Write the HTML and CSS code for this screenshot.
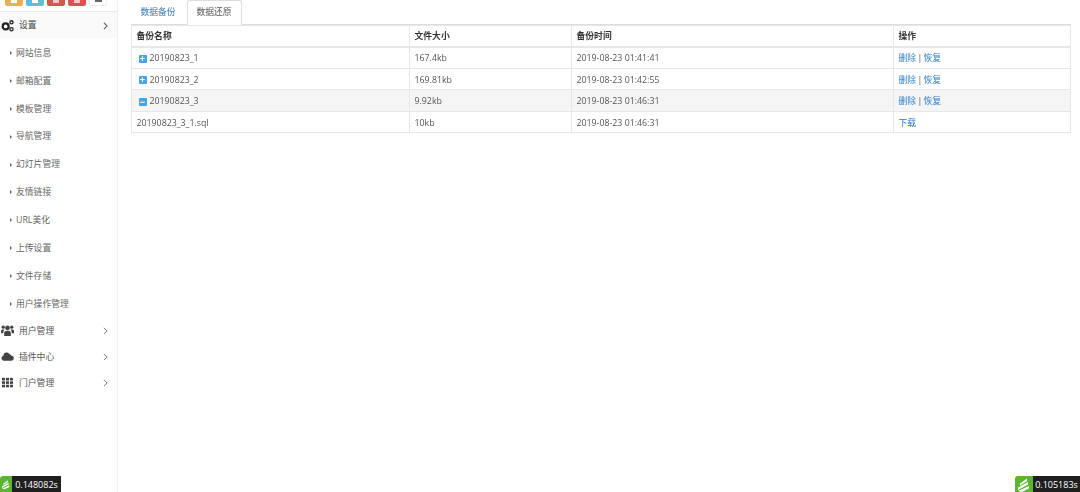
FILE: index.html
```html
<!DOCTYPE html>
<html lang="zh-CN">
<head>
<meta charset="utf-8">
<title>数据还原</title>
<link rel="stylesheet" href="styles.css">
</head>
<body>
<div class="app">
  <aside class="sidebar">
    <div class="shortcuts">
      <span class="sc sc-orange"><i></i></span>
      <span class="sc sc-blue"><i></i></span>
      <span class="sc sc-red"><i></i></span>
      <span class="sc sc-red"><i></i></span>
      <span class="sc sc-white"><i></i></span>
    </div>
    <div class="group group-open">
      <svg class="gi" viewBox="0 0 14 14"><circle cx="5" cy="8" r="3.2" fill="none" stroke="#222" stroke-width="2.4"/><circle cx="11.3" cy="3.6" r="1.7" fill="none" stroke="#222" stroke-width="1.4"/><circle cx="11.3" cy="11" r="1.7" fill="none" stroke="#222" stroke-width="1.4"/></svg>
      <span class="gl">设置</span>
      <svg class="chev" viewBox="0 0 6 10"><path d="M1 1l4 4-4 4" fill="none" stroke="#555" stroke-width="1.3"/></svg>
    </div>
    <ul class="sub">
      <li>网站信息</li><li>邮箱配置</li><li>模板管理</li><li>导航管理</li><li>幻灯片管理</li><li>友情链接</li><li>URL美化</li><li>上传设置</li><li>文件存储</li><li>用户操作管理</li>
    </ul>
    <div class="group">
      <svg class="gi" viewBox="0 0 14 14"><g fill="#444"><circle cx="7" cy="4.200" r="2.500"/><circle cx="2.400" cy="3.400" r="1.800"/><circle cx="11.600" cy="3.400" r="1.800"/><path d="M3.400 13V9.600c0-1.500 1.200-2.400 3.600-2.400s3.600.9 3.600 2.400V13z"/><path d="M0 10V7.400c0-1 .8-1.600 2.400-1.600.6 0 1 .1 1.400.3C2.700 7 2.400 8 2.400 10z"/><path d="M14 10V7.400c0-1-.8-1.600-2.400-1.600-.6 0-1 .1-1.400.3 1.100.9 1.400 1.900 1.400 3.900z"/></g></svg>
      <span class="gl">用户管理</span>
      <svg class="chev" viewBox="0 0 6 10"><path d="M1 1l4 4-4 4" fill="none" stroke="#777" stroke-width="1.2"/></svg>
    </div>
    <div class="group">
      <svg class="gi" viewBox="0 0 14 14"><path fill="#444" d="M3 11.500a2.700 2.700 0 0 1-.5-5.300A3.600 3.600 0 0 1 9.300 4.600a2.200 2.200 0 0 1 1.900 1.500A2.700 2.700 0 0 1 11 11.500z"/></svg>
      <span class="gl">插件中心</span>
      <svg class="chev" viewBox="0 0 6 10"><path d="M1 1l4 4-4 4" fill="none" stroke="#777" stroke-width="1.2"/></svg>
    </div>
    <div class="group">
      <svg class="gi" viewBox="0 0 14 14"><g fill="#444"><rect x="1" y="2" width="3.300" height="2.800"/><rect x="5.300" y="2" width="3.300" height="2.800"/><rect x="9.600" y="2" width="3.300" height="2.800"/><rect x="1" y="5.700" width="3.300" height="2.800"/><rect x="5.300" y="5.700" width="3.300" height="2.800"/><rect x="9.600" y="5.700" width="3.300" height="2.800"/><rect x="1" y="9.400" width="3.300" height="2.800"/><rect x="5.300" y="9.400" width="3.300" height="2.800"/><rect x="9.600" y="9.400" width="3.300" height="2.800"/></g></svg>
      <span class="gl">门户管理</span>
      <svg class="chev" viewBox="0 0 6 10"><path d="M1 1l4 4-4 4" fill="none" stroke="#777" stroke-width="1.2"/></svg>
    </div>
  </aside>
  <main class="main">
    <nav class="tabs">
      <a class="tab">数据备份</a>
      <a class="tab tab-active">数据还原</a>
    </nav>
    <table class="table">
      <colgroup><col class="c1"><col class="c2"><col class="c3"><col class="c4"></colgroup>
      <thead>
        <tr><th>备份名称</th><th>文件大小</th><th>备份时间</th><th>操作</th></tr>
      </thead>
      <tbody>
        <tr><td><span class="tg">+</span>20190823_1</td><td>167.4kb</td><td>2019-08-23 01:41:41</td><td class="ops"><a>删除</a> | <a>恢复</a></td></tr>
        <tr><td><span class="tg">+</span>20190823_2</td><td>169.81kb</td><td>2019-08-23 01:42:55</td><td class="ops"><a>删除</a> | <a>恢复</a></td></tr>
        <tr class="row-open"><td><span class="tg">−</span>20190823_3</td><td>9.92kb</td><td>2019-08-23 01:46:31</td><td class="ops"><a>删除</a> | <a>恢复</a></td></tr>
        <tr><td>20190823_3_1.sql</td><td>10kb</td><td>2019-08-23 01:46:31</td><td class="ops"><a>下载</a></td></tr>
      </tbody>
    </table>
  </main>
</div>
<div class="trace trace-left">
  <span class="logo"><svg viewBox="0 0 18 16"><path d="M3 15l11-5v2.500L7 16zM3 11.500l10-5.500v2.500L3 14zM5 7.500l7-5v2.500l-7 4.500z" fill="#fff"/></svg></span><span class="time">0.148082s</span>
</div>
<div class="trace trace-right">
  <span class="logo"><svg viewBox="0 0 18 16"><path d="M3 15l11-5v2.500L7 16zM3 11.500l10-5.500v2.500L3 14zM5 7.500l7-5v2.500l-7 4.500z" fill="#fff"/></svg></span><span class="time">0.105183s</span>
</div>
</body>
</html>
```
FILE: styles.css
```css
* { box-sizing: border-box; }
html, body { margin: 0; height: 100%; overflow: hidden; }
body {
  background: #fff;
  color: #555;
  font: 8.8px/1.4 "Open Sans", "Noto Sans CJK SC", sans-serif;
}
.app { display: flex; height: 492px; filter: blur(0.3px); }

.sidebar {
  width: 118px;
  flex: none;
  border-right: 1px solid #f0f0f0;
  background: #fff;
}
.shortcuts {
  height: 12px;
  display: flex;
  gap: 3px;
  padding-left: 5px;
  border-bottom: 1px solid #e8e8e8;
  background: #fff;
  overflow: hidden;
}
.sc {
  width: 18px;
  height: 6px;
  border-radius: 0 0 2px 2px;
  display: flex;
  justify-content: center;
}
.sc i { display: block; width: 6px; height: 3px; background: #fff; }
.sc-orange { background: #f0ad4e; }
.sc-blue { background: #5bc0de; }
.sc-red { background: #d9534f; }
.sc-red i { background: #f3c9c4; }
.sc-white { background: #fff; border: 1px solid #eee; border-top: 0; }
.sc-white i { background: #666; width: 7px; height: 2px; }

.group {
  height: 26px;
  display: flex;
  align-items: center;
  padding: 0 9px 0 1px;
  color: #555;
}
.group-open { background: #f9f9f9; color: #444; padding-top: 1px; }
.gi { width: 13px; height: 13px; flex: none; }
.gl { margin-left: 5px; flex: 1; }
.chev { width: 5px; height: 8px; flex: none; }

.sub { list-style: none; margin: 1px 0 0; padding: 0; }
.sub li {
  height: 27.900px;
  display: flex;
  align-items: center;
  padding-left: 16px;
  position: relative;
  color: #666;
}
.sub li::before {
  content: "";
  position: absolute;
  left: 10px;
  top: 50%;
  margin-top: -2px;
  border-left: 2.500px solid #666;
  border-top: 2px solid transparent;
  border-bottom: 2px solid transparent;
}

.main { flex: 1; min-width: 0; padding-left: 13px; padding-right: 9px; }
.tabs {
  height: 25px;
  display: flex;
  border-bottom: 1px solid #ddd;
}
.tab {
  height: 25px;
  padding-top: 5px;
  color: #337ab7;
  border: 1px solid transparent;
  border-radius: 3px 3px 0 0;
  width: 56px;
  padding-right: 2px;
  text-align: center;
  white-space: nowrap;
}
.tab-active {
  color: #555;
  background: #fff;
  border-color: #ddd #ddd #fff;
  width: 55px;
  padding-right: 1px;
}

.table {
  width: 100%;
  border-collapse: collapse;
  table-layout: fixed;
}
.c1 { width: 278px; }
.c2 { width: 162px; }
.c3 { width: 322px; }
.table th, .table td {
  border: 1px solid #e7e7e7;
  padding: 0 4.500px;
  height: 21.600px;
  text-align: left;
  vertical-align: middle;
  white-space: nowrap;
}
.table th { color: #333; font-weight: 700; border-bottom-width: 2px; height: 21px; }
.table td { color: #555; padding-top: 2px; }
.row-open td { background: #f5f5f5; }
.table a { color: #2e7fc4; }
.ops { word-spacing: -1px; }
.tg {
  display: inline-block;
  width: 8px;
  height: 8px;
  margin: 0 3px 0 2px;
  background: #46a3e6;
  color: #fff;
  border-radius: 1px;
  font: 700 9px/8px "Liberation Sans", sans-serif;
  text-align: center;
  vertical-align: -0.500px;
}

.trace {
  position: fixed;
  bottom: 0;
  height: 16px;
  display: flex;
}
.trace-left { left: 0; }
.trace-right { right: 0; }
.logo {
  width: 18px;
  background: #5cb531;
  border-radius: 3px 0 0 0;
  display: block;
}
.trace-left .logo { width: 12px; }
.logo svg { display: block; width: 100%; height: 100%; }
.time {
  background: #1f1f1f;
  color: #fff;
  width: 49px;
  text-align: center;
  font-size: 9px;
  line-height: 17px;
}
.trace-right .time { width: 47px; }
```
